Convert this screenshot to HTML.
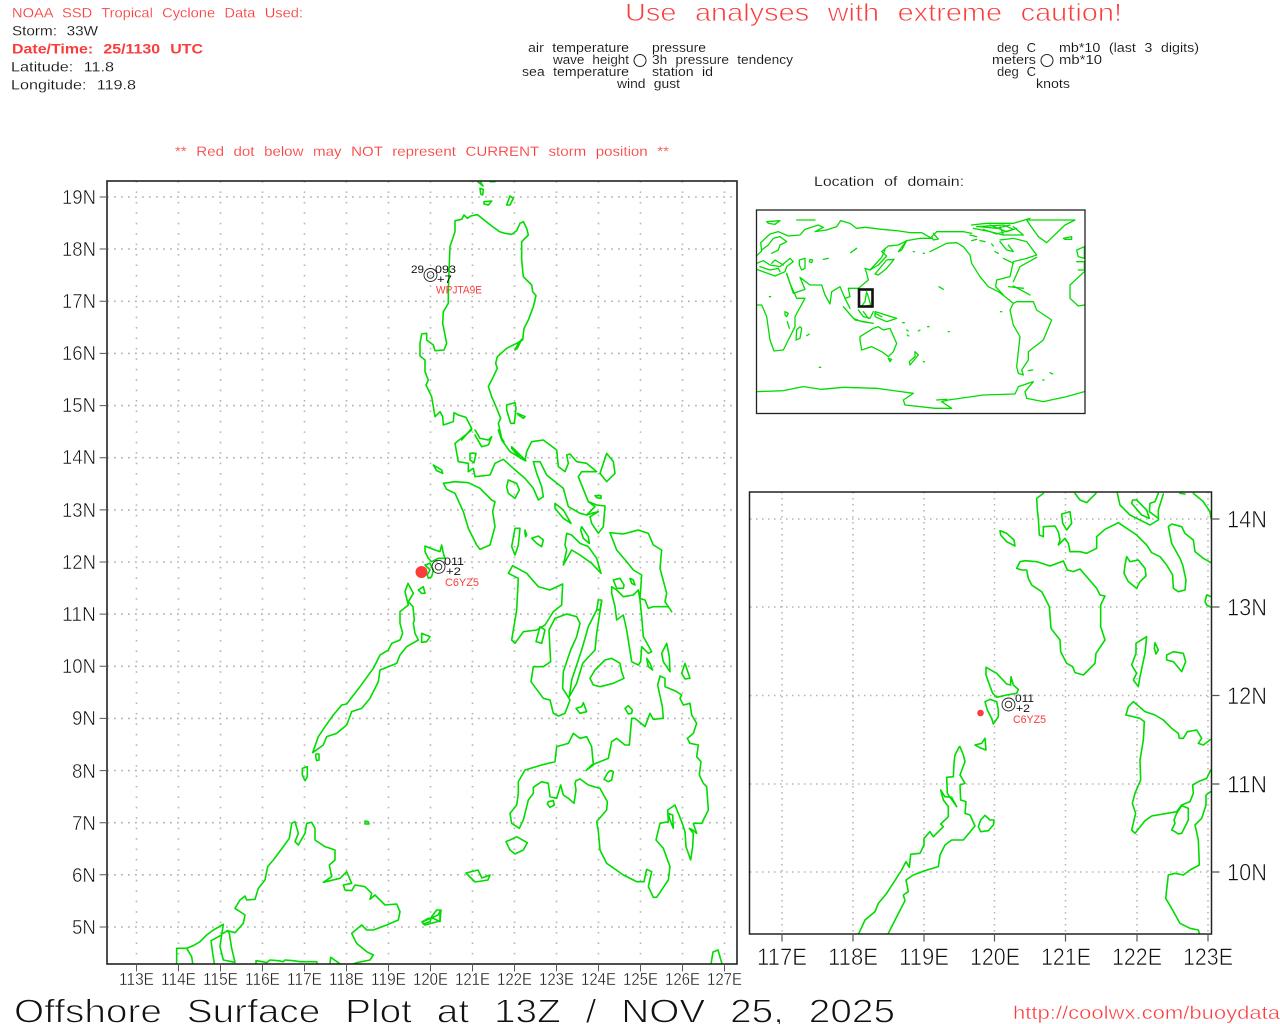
<!DOCTYPE html>
<html><head><meta charset="utf-8"><title>Offshore Surface Plot</title>
<style>
html,body{margin:0;padding:0;background:#fff}
svg{display:block}
path{vector-effect:non-scaling-stroke;fill:none;stroke-linejoin:round;stroke-linecap:round}
text{font-family:"Liberation Sans",sans-serif;fill:#111}
.r{fill:#fa3c3c}
.m{font-size:14px;stroke:#fff;stroke-width:.15px;word-spacing:5px}
.l{font-size:12.5px;stroke:#fff;stroke-width:.1px;word-spacing:4px}
.s{font-size:11px}
.ax{font-size:20px;stroke:#fff;stroke-width:.5px}
.ax2{font-size:17.5px;stroke:#fff;stroke-width:.4px}
.ax3{font-size:24px;stroke:#fff;stroke-width:.6px}
.big{font-size:33px;stroke:#fff;stroke-width:.9px;word-spacing:12px}
.use{font-size:25px;stroke:#fff;stroke-width:.7px;word-spacing:9px}
.land path{stroke:#00dc00;stroke-width:1.600}
.w path{stroke:#00dc00;stroke-width:1.300}
</style></head><body>
<svg xmlns="http://www.w3.org/2000/svg" width="1280" height="1024" viewBox="0 0 1280 1024">
<defs>
<clipPath id="c1"><rect x="107" y="181" width="630" height="783"/></clipPath>
<clipPath id="c2"><rect x="750" y="492" width="461.500" height="442"/></clipPath>
<clipPath id="c3"><rect x="757" y="210" width="328" height="203"/></clipPath>
</defs>
<rect width="1280" height="1024" fill="#fff"/>

<!-- header -->
<text x="12" y="17.500" class="m r" textLength="291" lengthAdjust="spacingAndGlyphs">NOAA SSD Tropical Cyclone Data Used:</text>
<text x="12" y="35.500" class="m" textLength="86" lengthAdjust="spacingAndGlyphs">Storm: 33W</text>
<text x="12" y="53.500" class="m r" style="font-weight:bold;stroke-width:0" textLength="191" lengthAdjust="spacingAndGlyphs">Date/Time: 25/1130 UTC</text>
<text x="11" y="71.500" class="m" textLength="103" lengthAdjust="spacingAndGlyphs">Latitude: 11.8</text>
<text x="11" y="89.500" class="m" textLength="125" lengthAdjust="spacingAndGlyphs">Longitude: 119.8</text>
<text x="175" y="156" class="m r" textLength="494" lengthAdjust="spacingAndGlyphs">** Red dot below may NOT represent CURRENT storm position **</text>
<text x="625" y="21" class="use r" textLength="497" lengthAdjust="spacingAndGlyphs">Use analyses with extreme caution!</text>

<text x="528" y="52" class="l" textLength="101" lengthAdjust="spacingAndGlyphs">air temperature</text>
<text x="553" y="64" class="l" textLength="76" lengthAdjust="spacingAndGlyphs">wave height</text>
<text x="522" y="76" class="l" textLength="107" lengthAdjust="spacingAndGlyphs">sea temperature</text>
<text x="617" y="88" class="l" textLength="63" lengthAdjust="spacingAndGlyphs">wind gust</text>
<text x="652" y="52" class="l" textLength="54" lengthAdjust="spacingAndGlyphs">pressure</text>
<text x="652" y="64" class="l" textLength="141" lengthAdjust="spacingAndGlyphs">3h pressure tendency</text>
<text x="652" y="76" class="l" textLength="61" lengthAdjust="spacingAndGlyphs">station id</text>
<circle cx="640" cy="60.500" r="6" fill="none" stroke="#222" stroke-width="1"/>
<text x="997" y="52" class="l" textLength="39" lengthAdjust="spacingAndGlyphs">deg C</text>
<text x="992" y="64" class="l" textLength="44" lengthAdjust="spacingAndGlyphs">meters</text>
<text x="997" y="76" class="l" textLength="39" lengthAdjust="spacingAndGlyphs">deg C</text>
<text x="1036" y="88" class="l" textLength="34" lengthAdjust="spacingAndGlyphs">knots</text>
<text x="1059" y="52" class="l" textLength="140" lengthAdjust="spacingAndGlyphs">mb*10 (last 3 digits)</text>
<text x="1059" y="64" class="l" textLength="43" lengthAdjust="spacingAndGlyphs">mb*10</text>
<circle cx="1047" cy="60.500" r="6" fill="none" stroke="#222" stroke-width="1"/>
<text x="814" y="186" class="m" textLength="150" lengthAdjust="spacingAndGlyphs">Location of domain:</text>

<!-- main grid -->
<path stroke="#b4b4b4" stroke-width="1.600" stroke-linecap="butt" style="stroke-linecap:butt" stroke-dasharray="1.600 8.830" d="M136.500 181V964M178.500 181V964M220.500 181V964M262.500 181V964M304.500 181V964M346.500 181V964M388.500 181V964M430.500 181V964M472.500 181V964M514.500 181V964M556.500 181V964M598.500 181V964M640.500 181V964M682.500 181V964M724.500 181V964"/>
<path stroke="#b4b4b4" stroke-width="1.600" style="stroke-linecap:butt" stroke-dasharray="1.800 5.200" d="M107 197H737M107 249H737M107 301.300H737M107 353.400H737M107 405.600H737M107 457.700H737M107 509.900H737M107 562H737M107 614.100H737M107 666.300H737M107 718.400H737M107 770.600H737M107 822.700H737M107 874.800H737M107 927H737"/>

<!-- main land -->
<g class="land" clip-path="url(#c1)">
<g transform="translate(380 180) scale(.33333)">
<path d="M245,780 L275,745 258,712 235,705 222,698 220,725 190,735 188,710 180,695 165,710 155,650 138,615 145,600 135,575 135,540 120,528 120,490 125,462 140,460 140,480 160,495 165,512 192,510 200,490 195,465 188,430 190,395 205,370 205,330 208,250 210,200 225,155 225,122 245,118 252,105 262,115 272,108 292,104 310,118 335,138 352,150 358,155 375,160 395,163 410,152 420,130 430,125 440,145 445,165 425,185 425,240 430,290 455,315 458,335 468,347 460,380 445,420 432,445 428,480 410,490 380,505 352,530 347,550 352,565 340,590 325,620 335,650 350,685 362,715 355,730 365,775 372,785"/>
<path d="M425,478 L415,490 405,510 412,505 425,478"/>
<path d="M335,0 L345,5 330,5"/>
<path d="M300,25 L310,28 308,45 302,42 300,25Z"/>
<path d="M312,65 L335,63 325,75 312,72Z"/>
<path d="M390,48 L400,55 390,75 380,75 390,48Z"/>
<path d="M380,675 L405,668 408,685 403,730 392,730 380,690Z"/>
<path d="M412,700 L435,710 430,715 415,705Z"/>
</g>
<g transform="translate(400 430) scale(.33333)">
<path d="M215,0 L165,40 175,95 205,100 205,125 220,115 225,140 270,135 285,100 310,88 340,115 375,145 400,175 415,210 430,200 425,170 410,130 400,95 420,95 440,135 490,175 505,230 540,250 560,255 585,230 565,215 535,140 545,125 590,125 560,100 530,95 510,72 500,75 505,100 495,125 475,110 470,60 430,30 395,35 380,65 375,92 330,65 305,30 295,0"/>
<path d="M560,255 L575,250 595,245 570,260 575,280 595,310 610,290 615,228 590,225 565,215"/>
<path d="M335,50 L360,75 378,92 362,85 335,55Z"/>
<path d="M225,0 L240,25 265,30 275,20 265,45 245,50 225,15"/>
<path d="M210,70 L228,70 222,98 210,90Z"/>
<path d="M100,105 L125,120 128,130 110,122Z"/>
<path d="M130,160 L165,155 205,158 240,175 275,210 285,215 278,245 285,290 270,345 240,358 230,345 205,295 190,245 165,190 140,178Z"/>
<path d="M325,150 L350,160 358,180 345,205 325,190 320,170Z"/>
<path d="M620,70 L640,95 645,130 620,155 600,130 610,100Z"/>
<path d="M585,197 L603,197 603,205 590,203Z"/>
<path d="M345,295 L360,295 355,345 345,375 335,350Z"/>
<path d="M375,300 L380,315 377,320 375,310Z"/>
<path d="M395,325 L415,318 430,330 425,350 410,340Z"/>
<path d="M325,430 L338,407 380,430 415,470 450,480 488,462 485,525 460,545 435,585 410,600 370,605 345,640 335,630 350,540 355,445Z"/>
<path d="M420,590 L435,600 425,640 408,635Z"/>
<path d="M500,310 L515,315 540,340 565,350 590,385 603,430 575,400 540,375 515,360 490,405 500,360 495,345Z"/>
<path d="M545,290 L565,320 568,340 550,325 542,300Z"/>
<path d="M465,220 L490,240 513,280 490,265 465,235Z"/>
<path d="M630,308 L670,312 715,300 745,310 760,345 785,360 780,415 800,490 795,515 815,545 805,530 760,530 745,535 735,510 720,505 725,435 700,420 680,395 650,360Z"/>
<path d="M640,450 L660,445 672,465 670,475 650,475Z"/>
<path d="M690,445 L700,450 705,465 695,460Z"/>
<path d="M635,470 L650,480 670,500 700,495 715,480 720,510 725,560 730,620 755,665 745,670 725,650 722,695 715,705 695,695 680,600 670,555 650,570 645,530 635,490Z"/>
<path d="M595,510 L605,510 600,540 590,540 595,510Z"/>
<path d="M605,515 L600,545 590,610 585,660"/>
<path d="M590,540 L565,590 545,660"/>
<path d="M465,565 L500,552 530,560 540,580 530,620 512,660"/>
<path d="M465,565 L447,600 450,660"/>
<path d="M740,685 L750,700 758,720 745,710Z"/>
<path d="M800,640 L808,680 810,725 790,695 785,670Z"/>
<path d="M75,348 L105,360 120,365 125,345 130,370 135,385 115,385 95,395 85,385 75,365Z"/>
<path d="M75,405 L90,400 100,420 95,440 85,445 82,435 90,420Z"/>
<path d="M55,480 L70,470 75,490 65,490Z"/>
<path d="M65,610 L90,620 80,635 65,637Z"/>
</g>
<g transform="translate(500 650) scale(.33333)">
<path d="M150,0 L152,35 130,50 100,50 93,95 130,145 150,150 160,190 175,198 195,190 210,150 188,115 190,65 212,0"/>
<path d="M245,0 L215,90 208,140 230,100 248,40 285,0"/>
<path d="M270,85 L285,60 315,30 335,25 360,40 365,65 372,85 340,100 300,110 280,105Z"/>
<path d="M555,40 L565,70 570,85 555,87 545,70Z"/>
<path d="M228,175 L245,170 250,158 260,185 240,190Z"/>
<path d="M375,175 L385,167 397,180 395,190 385,192Z"/>
<path d="M480,78 L495,85 495,110 530,125 545,135 540,145 550,165 570,160 575,195 590,220 580,250 562,265 570,280 595,285 590,320 603,335 598,375 610,400 620,410 625,480 605,520 580,520 590,550 578,540 568,535 580,550 578,590 572,630 558,590 555,545 545,515 525,465 503,480 505,515 480,520 468,570 490,595 510,650 505,690 470,742 460,742 445,710 455,665 440,658 432,695 410,695 370,675 320,640 300,600 295,545 290,515 320,480 322,455 300,415 265,405 240,387 228,392 225,400 228,420 222,460 205,445 190,435 182,405 170,445 150,440 145,400 125,395 100,412 100,430 85,450 80,470 70,510 58,535 35,520 30,490 50,465 55,430 55,395 75,360 125,345 165,335 170,290 205,280 220,250 240,265 260,260 275,290 280,345 258,362 275,345 325,325 335,275 350,265 375,285 388,285 395,205 405,205 435,230 450,190 460,208 490,205 487,170 473,105Z"/>
<path d="M505,490 L518,495 520,535 510,510Z"/>
<path d="M145,455 L160,452 163,465 150,472 142,462Z"/>
<path d="M330,362 L340,365 335,390 325,395 312,388 322,370Z"/>
<path d="M30,570 L50,560 82,578 70,600 45,612 30,600 18,575Z"/>
</g>
<g transform="translate(170 620) scale(.33333)">
<path d="M428,398 L445,350 465,320 490,285 515,255 530,252 570,200 610,145 630,105 655,90 665,70 690,60 698,40 690,10 690,0 690,-25 715,-45 705,-85 714,-110 730,-80 715,-55 729,-40 733,0 730,10 735,40 745,60 710,80 690,105 680,130 630,150 625,185 600,235 575,265 545,275 530,315 500,340 470,350 460,375Z"/>
<path d="M438,402 L447,402 447,420 440,422 437,410Z"/>
<path d="M397,445 L412,440 412,470 405,482 397,465Z"/>
<path d="M585,603 L595,605 597,612 585,612Z"/>
<path d="M20,1030 L20,985 50,985 65,1010 68,1030"/>
<path d="M50,985 L70,977 90,965 110,945 130,930 160,913 155,945 123,962 128,1000 133,1030"/>
<path d="M155,945 L150,980 160,1020 195,1027 185,985 178,940 172,932 160,940"/>
<path d="M172,932 L195,938 220,910 225,885 195,865 210,840 225,828 230,840 255,838 265,805 285,780 293,740 310,720 340,680 358,655 365,610 375,605 385,640 375,665 385,675 405,640 410,610 425,607 435,625 435,660 465,680 495,690 495,720 478,735 485,770 460,787 510,775 530,755 545,790 520,795 525,810 545,812 555,795 585,800 605,820 600,838 615,825 645,855 680,852 690,875 685,900 650,915 610,930 590,930 575,915 545,940 560,970 590,995 610,1005 600,1020 560,1028 550,1032"/>
<path d="M258,1032 L258,1022 278,1025 290,1028 300,1020 325,1022 340,1025 345,1020 370,1022 390,1025 440,1025 442,1032"/>
<path d="M480,1032 L482,1012 505,1028 510,1032"/>
<path d="M757,905 L760,912 780,905 785,890 800,870 810,870 810,905 800,900 790,895 775,895Z"/>
</g>
<path d="M422 922 L438 915 441 910 440 921 425 925Z"/>
<path d="M466 873 L478 870 482 878 490 875 488 880 475 882Z"/>
<path d="M711 964 L713 952 718 950 722 964"/>
<path d="M480 181 L483 186 478 182"/>
</g>

<rect x="107" y="181" width="630" height="783" fill="none" stroke="#222" stroke-width="1.600"/>
<!-- main ticks -->
<path stroke="#555" stroke-width="1" d="M136.500 964v7M178.500 964v7M220.500 964v7M262.500 964v7M304.500 964v7M346.500 964v7M388.500 964v7M430.500 964v7M472.500 964v7M514.500 964v7M556.500 964v7M598.500 964v7M640.500 964v7M682.500 964v7M724.500 964v7M100 197h7M100 249h7M100 301.300h7M100 353.400h7M100 405.600h7M100 457.700h7M100 509.900h7M100 562h7M100 614.100h7M100 666.300h7M100 718.400h7M100 770.600h7M100 822.700h7M100 874.800h7M100 927h7"/>
<g class="ax">
<text x="62" y="204" textLength="34" lengthAdjust="spacingAndGlyphs">19N</text>
<text x="62" y="256" textLength="34" lengthAdjust="spacingAndGlyphs">18N</text>
<text x="62" y="308" textLength="34" lengthAdjust="spacingAndGlyphs">17N</text>
<text x="62" y="360" textLength="34" lengthAdjust="spacingAndGlyphs">16N</text>
<text x="62" y="412" textLength="34" lengthAdjust="spacingAndGlyphs">15N</text>
<text x="62" y="464" textLength="34" lengthAdjust="spacingAndGlyphs">14N</text>
<text x="62" y="517" textLength="34" lengthAdjust="spacingAndGlyphs">13N</text>
<text x="62" y="569" textLength="34" lengthAdjust="spacingAndGlyphs">12N</text>
<text x="62" y="621" textLength="34" lengthAdjust="spacingAndGlyphs">11N</text>
<text x="62" y="673" textLength="34" lengthAdjust="spacingAndGlyphs">10N</text>
<text x="72" y="725" textLength="24" lengthAdjust="spacingAndGlyphs">9N</text>
<text x="72" y="778" textLength="24" lengthAdjust="spacingAndGlyphs">8N</text>
<text x="72" y="830" textLength="24" lengthAdjust="spacingAndGlyphs">7N</text>
<text x="72" y="882" textLength="24" lengthAdjust="spacingAndGlyphs">6N</text>
<text x="72" y="934" textLength="24" lengthAdjust="spacingAndGlyphs">5N</text>
</g>
<g class="ax2">
<text x="119" y="985" textLength="35" lengthAdjust="spacingAndGlyphs">113E</text>
<text x="161" y="985" textLength="35" lengthAdjust="spacingAndGlyphs">114E</text>
<text x="203" y="985" textLength="35" lengthAdjust="spacingAndGlyphs">115E</text>
<text x="245" y="985" textLength="35" lengthAdjust="spacingAndGlyphs">116E</text>
<text x="287" y="985" textLength="35" lengthAdjust="spacingAndGlyphs">117E</text>
<text x="329" y="985" textLength="35" lengthAdjust="spacingAndGlyphs">118E</text>
<text x="371" y="985" textLength="35" lengthAdjust="spacingAndGlyphs">119E</text>
<text x="413" y="985" textLength="35" lengthAdjust="spacingAndGlyphs">120E</text>
<text x="455" y="985" textLength="35" lengthAdjust="spacingAndGlyphs">121E</text>
<text x="497" y="985" textLength="35" lengthAdjust="spacingAndGlyphs">122E</text>
<text x="539" y="985" textLength="35" lengthAdjust="spacingAndGlyphs">123E</text>
<text x="581" y="985" textLength="35" lengthAdjust="spacingAndGlyphs">124E</text>
<text x="623" y="985" textLength="35" lengthAdjust="spacingAndGlyphs">125E</text>
<text x="665" y="985" textLength="35" lengthAdjust="spacingAndGlyphs">126E</text>
<text x="707" y="985" textLength="35" lengthAdjust="spacingAndGlyphs">127E</text>
</g>

<!-- main stations -->
<g fill="none" stroke="#222" stroke-width=".9">
<circle cx="430.500" cy="275" r="6.500"/><circle cx="430.500" cy="275" r="3.300"/>
<circle cx="438.500" cy="566.800" r="6.500"/><circle cx="438.500" cy="566.800" r="3.300"/>
</g>
<text x="411" y="273" class="s" textLength="13" lengthAdjust="spacingAndGlyphs">29</text>
<text x="435" y="273" class="s" textLength="21" lengthAdjust="spacingAndGlyphs">093</text>
<text x="437" y="283" class="s" textLength="15" lengthAdjust="spacingAndGlyphs">+7</text>
<text x="436" y="293.500" class="s r" textLength="46" lengthAdjust="spacingAndGlyphs">WPJTA9E</text>
<text x="444" y="565" class="s" textLength="20" lengthAdjust="spacingAndGlyphs">011</text>
<text x="446" y="575" class="s" textLength="15" lengthAdjust="spacingAndGlyphs">+2</text>
<text x="445" y="586" class="s r" textLength="34" lengthAdjust="spacingAndGlyphs">C6YZ5</text>
<circle cx="421.500" cy="572" r="6" fill="#fa3c3c"/>

<!-- world map -->
<g class="w" clip-path="url(#c3)">
<g transform="translate(750 170) scale(.33333)">
<path d="M20,257 L35,243 32,218 60,192 85,185 115,198 150,195 165,178 205,165 220,172 195,185 230,180 260,170 272,152 300,160 320,175 345,172 395,178 440,182 480,188 515,188 545,205 510,205 470,212 445,225 415,228 395,245 410,258 385,285 360,300 345,295 350,310 355,330 325,355 295,355 300,380 285,385 300,415 285,385 270,350 245,365 240,402 225,375 215,345 180,345 150,322 165,358 130,370 110,310"/>
<path d="M20,280 L40,272 60,285 90,290 120,265 130,275 110,290 105,305 75,318 20,298"/>
<path d="M35,240 L55,225 70,205 90,200 110,215 90,225 85,240 65,250 M30,290 L60,300 85,295 90,305 M100,285 L75,270 65,280"/>
<path d="M20,405 L35,405 50,440 60,510 72,543 100,540 125,490 135,470 135,440 165,385 140,385 120,340 110,312"/>
<path d="M148,270 L165,265 165,295 155,300 148,285Z"/>
<path d="M180,268 L188,270 185,278 178,275Z"/>
<path d="M220,268 L235,265"/>
<path d="M375,312 L410,270 432,268 410,295 385,315Z"/>
<path d="M302,248 L320,235"/>
<path d="M360,300 L395,262 405,240"/>
<path d="M445,245 L470,212 455,240Z"/>
<path d="M280,410 L310,445 335,455 370,460 315,450Z"/>
<path d="M325,420 L340,440 360,445 370,425"/>
<path d="M375,425 L440,445 410,455 375,440Z"/>
<path d="M330,500 L370,475 385,470 400,480 420,475 440,520 430,545 415,560 395,545 365,530 335,540 330,510Z"/>
<path d="M415,565 L425,568 420,575Z"/>
<path d="M495,545 L505,555 480,585 478,575 495,560Z"/>
<path d="M458,458h5M470,480l5,3M472,495l4,3M505,483l5,-3M533,470h4M595,485h3M520,575h3M208,592h4M58,380h4M567,350l13,8M752,425h3M490,245h3M520,250h3"/>
<path d="M150,470 L155,475 150,505 138,510 140,480Z"/>
<path d="M170,497 L178,492"/>
<path d="M105,425 L115,430 110,440 105,435Z"/>
<path d="M112,455 L118,475"/>
<path d="M20,665 L100,662 160,650 215,658 280,652 380,655 490,670 460,690 465,705 555,715 605,715 575,695 595,690 700,675 795,672 805,650 850,635 825,665 830,685 880,695 950,680 1003,665"/>
<path d="M550,190 L565,207 550,210 545,200 560,185 640,185 665,190"/>
<path d="M540,245 L590,220 620,218 640,230 660,255 665,280 690,320 715,350 745,365 765,380 790,400 780,420 790,465 810,500 800,590 805,610 820,615 815,600 835,570 835,545 880,510 905,450 860,420 850,395 800,395 790,400"/>
<path d="M665,165 L710,160 750,160 790,160 840,145 M670,175 L720,185 760,195 M690,170 L740,175 780,165 M720,165 L770,185 800,175 M660,195 L680,200 M665,212 L680,208 M690,212 L705,215 M725,222 L730,228 M735,245 L745,250 M680,170 L760,165 790,178 740,192 700,178 M750,170 L760,195 820,195 790,170"/>
<path d="M750,210 L790,205 830,215 860,255 830,265 790,275 780,320 740,330 737,350 760,375 M790,335 L810,290 860,262 M750,215 L770,240 790,245 775,225"/>
<path d="M775,350 L820,355 M790,348 L840,375 M760,265 L790,280"/>
<path d="M830,150 L975,150 945,165 890,218 865,200 840,165Z"/>
<path d="M1003,405 L985,408 960,385 960,345 1003,305"/>
<path d="M940,205 L965,200 965,208 945,208Z"/>
<path d="M980,240 L1003,230 1003,265 985,260Z"/>
<path d="M980,275 L1003,275 1003,300 985,300"/>
<path d="M50,155 L90,152 75,163 55,160Z"/>
<path d="M140,150 L195,150"/>
<path d="M835,602 L848,600M900,608l8,4M878,630h4"/>
<path d="M560,690 L590,688"/>
<path d="M350,365 L345,395 335,408 M352,370 L362,405 350,408"/>
<path d="M340,425 L355,445 M375,430 L395,440"/>
</g>
</g>
<rect x="756.500" y="210" width="328.500" height="203.500" fill="none" stroke="#222" stroke-width="1.300"/>
<rect x="859" y="289.500" width="13.500" height="17" fill="none" stroke="#111" stroke-width="2.600"/>

<!-- inset grid -->
<path stroke="#b4b4b4" stroke-width="1.500" style="stroke-linecap:butt" stroke-dasharray="1.500 4.500" d="M782 492V934M853 492V934M924 492V934M994.500 492V934M1065.500 492V934M1137 492V934M1208 492V934"/>
<path stroke="#b4b4b4" stroke-width="1.500" style="stroke-linecap:butt" stroke-dasharray="1.500 4.500" d="M750 519H1212M750 607H1212M750 695.500H1212M750 784H1212M750 872H1212"/>

<!-- inset land -->
<g class="land" clip-path="url(#c2)">
<g transform="translate(990 490) scale(.33333)">
<path d="M160,10 L140,25 142,60 145,85 148,135 160,140 160,110 195,108 205,125 210,150 205,165 225,145 235,160 240,185 270,185 290,190 320,175 320,140 345,118 385,98 440,135 470,165 485,188 510,200 530,225 548,255 550,295 565,305 585,300 588,270 578,225 570,205 545,160 535,110 545,102 575,110 585,130 610,150 615,185 640,205 663,218"/>
<path d="M255,10 L270,30 290,38 318,10"/>
<path d="M382,10 L390,45 420,75 480,105 505,90 505,60 520,12"/>
<path d="M480,40 L495,35 505,10 M480,40 L478,65 505,85"/>
<path d="M428,30 L440,30 470,60 478,85 455,75 425,40Z"/>
<path d="M570,10 L585,12"/>
<path d="M610,10 L640,35 660,65 663,85"/>
<path d="M215,72 L240,65 245,100 230,120 218,100Z"/>
<path d="M30,122 L50,130 72,150 75,168 50,155 32,135Z"/>
<path d="M80,235 L90,215 105,212 140,215 180,228 220,213 232,240 250,245 270,237 320,295 330,315 345,318 332,345 332,410 345,450 318,490 315,520 295,540 280,555 255,548 248,530 230,520 212,485 210,450 183,415 178,350 155,305 125,285 115,265 110,240 95,240Z"/>
<path d="M410,200 L420,215 445,210 465,235 468,258 450,275 440,295 415,275 402,250 405,225Z"/>
<path d="M438,460 L470,440 465,490 450,560 445,590 430,570 440,550 425,525 438,490Z"/>
<path d="M495,458 L505,480 498,492 493,475Z"/>
<path d="M530,495 L550,485 580,490 587,515 575,545 550,515 530,510Z"/>
<path d="M663,320 L650,315 645,335 650,345 663,352"/>
</g>
<g transform="translate(1100 690) scale(.33333)">
<path d="M78,75 L85,50 100,35 135,65 165,75 190,90 215,115 235,130 238,145 250,145 262,125 290,120 305,145 295,160 310,165 332,148"/>
<path d="M78,75 L120,85 133,95 130,150 120,210 122,270 105,310 97,340 107,370 95,420 105,430 135,392 155,378 230,365 245,345 270,335 280,310 278,285 295,275 320,265 332,240"/>
<path d="M245,347 L265,355 265,390 245,430 235,432 225,425 215,420 225,400 222,390 230,370Z"/>
<path d="M332,305 L318,315 318,345 305,385 285,405 295,450 298,525 270,540 250,555 225,550 205,555 197,625 215,655 240,700 270,715 295,720 298,730"/>
</g>
<g transform="translate(850 660) scale(.33333)">
<path d="M408,22 L440,40 470,72 482,75 483,50 490,75 505,88 500,100 470,105 440,112 428,100 415,65 408,45Z"/>
<path d="M405,125 L420,118 440,125 445,150 445,170 430,192 425,175 412,150Z"/>
<path d="M375,255 L395,250 405,235 408,270 395,265 388,262Z"/>
<path d="M330,260 L340,285 345,305 330,345 345,370 330,375 332,420 348,425 345,460 360,465 375,498 340,540 305,540 285,555 270,585 265,620 225,632 190,645 168,660 175,695 160,705 165,722 130,790 110,830"/>
<path d="M328,260 L315,285 312,310 310,350 290,352 292,400 320,440 305,412 285,410 272,390 280,420 295,440 295,470 272,492 280,500 250,530 240,515 222,535 222,555 210,580 182,583 178,622 168,605 155,630 110,700 85,730 75,755 45,780 22,830"/>
<path d="M405,466 L420,480 432,480 430,495 415,512 392,515 385,500 392,480Z"/>
</g>
</g>

<rect x="749.500" y="492" width="462" height="442" fill="none" stroke="#222" stroke-width="1.500"/>
<path stroke="#555" stroke-width="1.200" d="M782 934v7M853 934v7M924 934v7M994.500 934v7M1065.500 934v7M1137 934v7M1208 934v7M1212 519h7M1212 607h7M1212 695.500h7M1212 784h7M1212 872h7"/>
<g class="ax3">
<text x="1227" y="527.500" textLength="40" lengthAdjust="spacingAndGlyphs">14N</text>
<text x="1227" y="615.500" textLength="40" lengthAdjust="spacingAndGlyphs">13N</text>
<text x="1227" y="704" textLength="40" lengthAdjust="spacingAndGlyphs">12N</text>
<text x="1227" y="792.500" textLength="40" lengthAdjust="spacingAndGlyphs">11N</text>
<text x="1227" y="880.500" textLength="40" lengthAdjust="spacingAndGlyphs">10N</text>
<text x="757" y="965" textLength="50" lengthAdjust="spacingAndGlyphs">117E</text>
<text x="828" y="965" textLength="50" lengthAdjust="spacingAndGlyphs">118E</text>
<text x="899" y="965" textLength="50" lengthAdjust="spacingAndGlyphs">119E</text>
<text x="970" y="965" textLength="50" lengthAdjust="spacingAndGlyphs">120E</text>
<text x="1041" y="965" textLength="50" lengthAdjust="spacingAndGlyphs">121E</text>
<text x="1112" y="965" textLength="50" lengthAdjust="spacingAndGlyphs">122E</text>
<text x="1183" y="965" textLength="50" lengthAdjust="spacingAndGlyphs">123E</text>
</g>

<!-- inset station -->
<g fill="none" stroke="#222" stroke-width=".9">
<circle cx="1008.500" cy="704.500" r="6.500"/><circle cx="1008.500" cy="704.500" r="3.300"/>
</g>
<text x="1015" y="702" class="s" textLength="19" lengthAdjust="spacingAndGlyphs">011</text>
<text x="1016" y="712" class="s" textLength="14" lengthAdjust="spacingAndGlyphs">+2</text>
<text x="1013" y="723" class="s r" textLength="33" lengthAdjust="spacingAndGlyphs">C6YZ5</text>
<circle cx="980.500" cy="713" r="3.300" fill="#fa3c3c"/>

<!-- footer -->
<text x="14" y="1022.500" class="big" textLength="881" lengthAdjust="spacingAndGlyphs">Offshore Surface Plot at 13Z / NOV 25, 2025</text>
<text x="1013" y="1019" class="r" style="font-size:18px;stroke:#fff;stroke-width:.4px" textLength="267" lengthAdjust="spacingAndGlyphs">http://coolwx.com/buoydata</text>
</svg>
</body></html>
